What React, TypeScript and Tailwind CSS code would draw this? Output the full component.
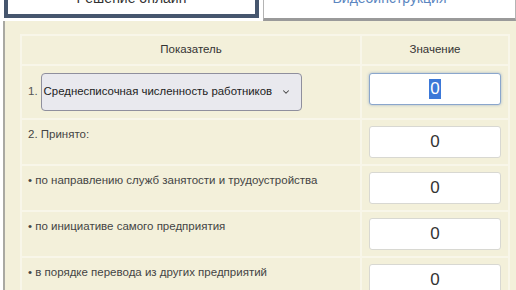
import { ChevronDown } from "lucide-react";

const rows = [
  "2. Принято:",
  "• по направлению служб занятости и трудоустройства",
  "• по инициативе самого предприятия",
  "• в порядке перевода из других предприятий",
];

export default function App() {
  return (
    <div className="w-[516px] h-[290px] overflow-hidden bg-white font-['Liberation_Sans',Arial,sans-serif] text-[#333]">
      {/* tabs */}
      <div className="flex items-start -mt-[16px]">
        <div className="ml-[4px] w-[255px] h-[34px] border-4 border-[#46566e] bg-white flex items-start justify-center">
          <span className="text-[14px] leading-[16px] mt-[2px] text-[#333]">Решение онлайн</span>
        </div>
        <div className="ml-[4px] flex-1 h-[37px] border border-[#b4b4b4] border-b-[3px] border-b-[#9a9a9a] bg-white flex items-start justify-center">
          <span className="text-[14px] leading-[16px] mt-[5px] text-[#5b86c0]">Видеоинструкция</span>
        </div>
      </div>

      {/* panel */}
      <div className="ml-[3px] border-l-2 border-[#a9a9a2] bg-[#f3f0da] pt-[13px] pl-[15px] pr-[6px] h-[280px]">
        <table className="w-full border-collapse text-[11px]">
          <thead>
            <tr className="h-[30px]">
              <th className="w-[340px] border-2 border-[#f8f6e9] font-normal text-[11.5px] text-[#333]">Показатель</th>
              <th className="border-2 border-[#f8f6e9] font-normal text-[11.5px] text-[#333]">Значение</th>
            </tr>
          </thead>
          <tbody>
            <tr>
              <td className="border-2 border-[#f8f6e9] px-[6px] py-[7px]">
                <div className="flex items-center gap-[3px]">
                  <span className="text-[11.5px] text-[#555]">1.</span>
                  <div className="w-[261px] h-[38px] rounded-[4px] border border-[#8f8f9d] bg-[#e9e9ee] flex items-center pl-[2px] pr-[10px]">
                    <span className="whitespace-nowrap text-[11.4px] text-[#222]">Среднесписочная численность работников</span>
                    <ChevronDown size={10} strokeWidth={2.5} className="ml-auto shrink-0 text-[#444]" />
                  </div>
                </div>
              </td>
              <td className="border-2 border-[#f8f6e9] px-[7px] py-[7px] align-top">
                <div className="h-[32px] rounded-[3px] border border-[#8aa6cc] bg-white shadow-[0_0_3px_rgba(80,120,180,0.5)] flex items-center justify-center">
                  <span className="text-[17px] leading-[20px] bg-[#3b78d8] text-white px-[1px]">0</span>
                </div>
              </td>
            </tr>
            {rows.map((label) => (
              <tr key={label}>
                <td className="border-2 border-[#f8f6e9] px-[6px] pt-[7px] pb-[7px] align-top">
                  <div className="text-[11.5px] leading-[14px] text-[#444]">{label}</div>
                </td>
                <td className="border-2 border-[#f8f6e9] px-[7px] py-[6px] align-top">
                  <div className="h-[32px] rounded-[3px] border border-[#d8d8d2] bg-white flex items-center justify-center">
                    <span className="text-[17px] text-[#333]">0</span>
                  </div>
                </td>
              </tr>
            ))}
          </tbody>
        </table>
      </div>
    </div>
  );
}
